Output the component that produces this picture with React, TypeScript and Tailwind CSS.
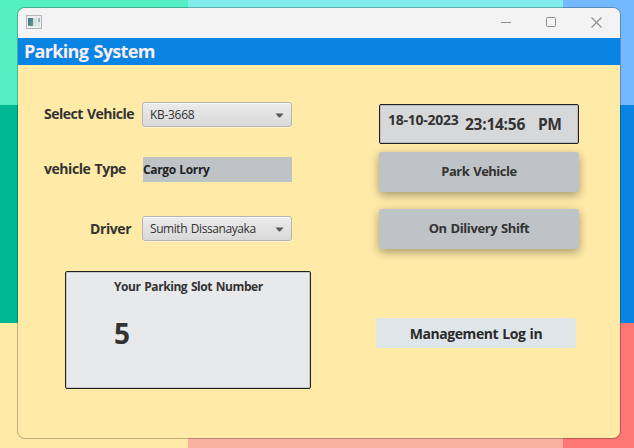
import type { ReactNode } from "react";

function Combo({ children }: { children: ReactNode }) {
  return (
    <div className="flex h-[25px] w-[150px] items-center justify-between rounded-[3px] border border-[#b5b5b5] bg-linear-to-b from-[#ececec] to-[#d9d9d9] pl-[7px] pr-[7px] pt-px text-[12px] shadow-[inset_0_1px_0_#f8f8f8,0_1px_0_#fff3d0]">
      {children}
      <svg width="9" height="5" viewBox="0 0 9 5">
        <path d="M0.5 0.5H8.5L5 4.5H4Z" fill="#555" />
      </svg>
    </div>
  );
}

function ActionButton({ children }: { children: ReactNode }) {
  return (
    <button className="flex h-10 w-[200px] items-center justify-center rounded-[3px] bg-[#bdc3c7] text-[13px] font-bold shadow-[0_3px_10px_rgba(0,0,0,0.36)]">
      {children}
    </button>
  );
}

function Backdrop() {
  return (
    <div className="absolute inset-0 grid grid-cols-[188px_375px_71px] grid-rows-[105px_218px_125px]">
      <div className="bg-[#55efc4]" />
      <div className="bg-[#81ecec]" />
      <div className="bg-[#74b9ff]" />
      <div className="bg-[#00b894]" />
      <div className="bg-[#00cec9]" />
      <div className="bg-[#0984e3]" />
      <div className="bg-[#ffeaa7]" />
      <div className="bg-[#fab1a0]" />
      <div className="bg-[#ff7675]" />
    </div>
  );
}

function TitleBar() {
  return (
    <div className="flex h-[30px] shrink-0 items-center justify-between bg-[#f3f3f3] pl-2 pr-[18px]">
      <svg width="16" height="14" viewBox="0 0 16 14" className="-mt-[2px]">
        <defs>
          <linearGradient id="app-pane" x1="0" y1="0" x2="1" y2="1">
            <stop offset="0" stopColor="#3e6fa0" />
            <stop offset="1" stopColor="#58a878" />
          </linearGradient>
        </defs>
        <rect x="0.5" y="0.5" width="15" height="13" fill="#eeeeee" stroke="#b3b6b9" />
        <rect x="2" y="3" width="5" height="8" fill="url(#app-pane)" />
        <rect x="7" y="3" width="4" height="8" fill="#dedede" />
        <rect x="12" y="3" width="2" height="4" fill="#8dbdb5" />
        <rect x="12" y="7" width="2" height="4" fill="#e0e5e8" />
      </svg>
      <div className="-mt-[2px] flex items-center gap-[35px] text-[#8c8c8c]">
        <svg width="10" height="11" viewBox="0 0 10 11">
          <path d="M0 5.5H10" stroke="currentColor" />
        </svg>
        <svg width="10" height="10" viewBox="0 0 10 10">
          <rect x="0.5" y="0.5" width="9" height="9" rx="1" fill="none" stroke="currentColor" />
        </svg>
        <svg width="11" height="11" viewBox="0 0 11 11">
          <path d="M0.5 0.5L10.5 10.5M10.5 0.5L0.5 10.5" stroke="currentColor" strokeWidth="1.1" />
        </svg>
      </div>
    </div>
  );
}

export default function App() {
  return (
    <div className="relative h-[448px] w-[634px] overflow-hidden pl-[17px] pt-[7px] font-['Open_Sans','Noto_Sans',sans-serif] text-[#333]">
      <Backdrop />
      <main className="relative flex h-[432px] w-[604px] flex-col overflow-hidden rounded-[8px] border border-black/25 bg-[#ffeaa7] bg-clip-padding whitespace-nowrap">
        <TitleBar />
        <header className="flex h-[27px] shrink-0 items-center bg-[#0984e3] pl-[6px] text-[18px] font-bold tracking-[-0.7px] [word-spacing:1.5px] text-[#fbeefb]">
          <h1>Parking System</h1>
        </header>
        <div className="flex">
          <section className="w-[358px] pt-[37px]">
            <div className="flex items-center pl-[26px]">
              <span className="w-[98px] -translate-y-px text-[14px] leading-5 font-bold tracking-[-0.5px] [word-spacing:1px]">Select Vehicle</span>
              <Combo>
                <span className="tracking-[-0.3px]">KB-3668</span>
              </Combo>
            </div>
            <div className="mt-[30px] flex items-center pl-[26px]">
              <span className="w-[99px] -translate-y-px text-[14px] leading-5 font-bold tracking-[-0.45px] [word-spacing:1px]">vehicle Type</span>
              <div className="flex h-[25px] w-[149px] items-center bg-[#bdc3c7] pt-px text-[12px] font-bold tracking-[-0.35px] [word-spacing:0.7px] text-[#222]">Cargo Lorry</div>
            </div>
            <div className="mt-[34px] flex items-center pl-[72px]">
              <span className="w-[52px] text-[14px] leading-5 font-bold tracking-[-0.4px]">Driver</span>
              <Combo>
                <span className="tracking-[-0.43px] [word-spacing:1px]">Sumith Dissanayaka</span>
              </Combo>
            </div>
            <div className="mt-[30px] ml-[47px] h-[118px] w-[246px] rounded-[2px] border border-[#202020] bg-[#e8e9ea] pl-[48px] pt-[7px] font-bold shadow-[inset_0_0_0_1px_#c4c9cc]">
              <div className="text-[12px] leading-4 tracking-[-0.43px] [word-spacing:1px]">Your Parking Slot Number</div>
              <div className="mt-[20px] text-[28px] leading-[36px]">5</div>
            </div>
          </section>
          <section className="pt-[39px]">
            <div className="ml-[3px] flex h-10 w-[200px] rounded-[2px] border border-[#202020] bg-[#d7d8d9] pl-2 font-bold shadow-[inset_0_0_0_1px_#b8bcbf]">
              <span className="w-[77px] pt-[7px] text-[14px] leading-4 tracking-[-0.25px]">18-10-2023</span>
              <span className="w-[73px] pt-[9px] text-[15.5px] leading-5 tracking-[-0.25px]">23:14:56</span>
              <span className="pt-[9px] text-[15.5px] leading-5 tracking-[-0.5px]">PM</span>
            </div>
            <div className="mt-2 ml-[3px] flex flex-col gap-[17px]">
              <ActionButton>
                <span className="tracking-[-0.5px] [word-spacing:1px]">Park Vehicle</span>
              </ActionButton>
              <ActionButton>
                <span className="tracking-[-0.4px] [word-spacing:0.8px]">On Dilivery Shift</span>
              </ActionButton>
            </div>
            <button className="mt-[69px] flex h-[30px] w-[200px] items-center justify-center rounded-[3px] bg-[#dfe6e9] text-[14px] font-bold tracking-[-0.45px] [word-spacing:1px] text-[#2a2a2a]">
              Management Log in
            </button>
          </section>
        </div>
      </main>
    </div>
  );
}
